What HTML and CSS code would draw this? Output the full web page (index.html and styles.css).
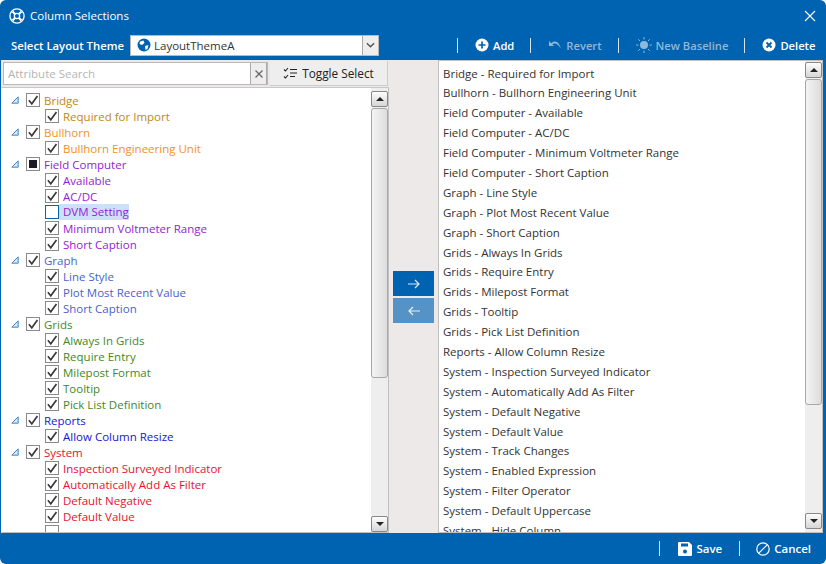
FILE: index.html
```html
<!DOCTYPE html>
<html lang="en">
<head>
<meta charset="utf-8">
<title>Column Selections</title>
<link rel="stylesheet" href="styles.css">
</head>
<body>
<svg class="defs" width="0" height="0" aria-hidden="true">
  <symbol id="chk" viewBox="0 0 14 14"><path d="M2.2 7.200 5.600 11.400 12.200 2.400" fill="none" stroke="#3c3c3c" stroke-width="2"/></symbol>
  <symbol id="tri" viewBox="0 0 8 8"><path d="M.8 7.200H7.200V.8Z" fill="#d5e6f4" stroke="#3f8ac4" stroke-width="1"/></symbol>
</svg>
<div class="window">
  <header class="titlebar">
    <svg class="title-icon" viewBox="0 0 18 18" width="16" height="16"><circle cx="9" cy="9" r="8" fill="none" stroke="#fff" stroke-width="1.5"/><circle cx="9" cy="9" r="3" fill="none" stroke="#fff" stroke-width="1.5"/><path d="M4 4 7 7M14 4 11 7M4 14 7 11M14 14 11 11" stroke="#fff" stroke-width="2.4"/></svg>
    <span class="title-text">Column Selections</span>
    <svg class="close" viewBox="0 0 12 12" width="12" height="12"><path d="M1 1 11 11M11 1 1 11" stroke="#fff" stroke-width="1.1" fill="none"/></svg>
  </header>
  <div class="toolbar">
    <span class="theme-label">Select Layout Theme</span>
    <div class="combo">
      <svg class="globe" viewBox="0 0 14 14" width="14" height="14"><circle cx="7" cy="7" r="6.5" fill="#0063b1"/><path d="M3 3.5 6.5 2.5 7.5 5 5 7 2.5 6ZM8 8 11.5 7 10.5 11 8.5 12Z" fill="#fff"/></svg>
      <span class="combo-text">LayoutThemeA</span>
      <span class="combo-btn"><svg viewBox="0 0 10 6" width="9" height="6"><path d="M1 1 5 5 9 1" fill="none" stroke="#555" stroke-width="1.6"/></svg></span>
    </div>
    <div class="actions">
      <i class="sep"></i>
      <span class="act"><svg viewBox="0 0 14 14" width="14" height="14"><circle cx="7" cy="7" r="6.5" fill="#fff"/><path d="M7 3.5v7M3.500 7h7" stroke="#0063b1" stroke-width="1.7"/></svg>Add</span>
      <i class="sep"></i>
      <span class="act off"><svg viewBox="0 0 14 10" width="14" height="10"><path d="M1 1V6H6L4.300 4.300C7 2.800 10 3.600 12.800 8.600 11.500 2.500 7.300-.6 3.200 3.200Z" fill="#8fb9da"/></svg>Revert</span>
      <i class="sep"></i>
      <span class="act off"><svg viewBox="0 0 16 16" width="16" height="16"><circle cx="8" cy="8" r="4" fill="#8fb9da"/><path d="M8 0v2.500M8 13.500V16M0 8h2.500M13.500 8H16M2.300 2.300 4 4M12 12l1.700 1.700M13.700 2.300 12 4M4 12l-1.700 1.700" stroke="#8fb9da"/></svg>New Baseline</span>
      <i class="sep"></i>
      <span class="act"><svg viewBox="0 0 14 14" width="14" height="14"><circle cx="7" cy="7" r="6.500" fill="#fff"/><path d="M4.500 4.500 9.500 9.500M9.500 4.500 4.500 9.500" stroke="#0063b1" stroke-width="1.800"/></svg>Delete</span>
    </div>
  </div>
  <main class="content">
    <section class="left">
      <div class="searchrow">
        <div class="search">
          <span class="placeholder">Attribute Search</span>
          <span class="clear"><svg viewBox="0 0 8 8" width="8" height="8"><path d="M.5.500 7.500 7.500M7.500.500.500 7.500" stroke="#666" stroke-width="1.300"/></svg></span>
        </div>
        <button class="toggle"><svg viewBox="0 0 14 12" width="14" height="12"><path d="M1 2.500 2.500 4 5 1M7 2.500h7M7 6h7M1 9.500 2.500 11 5 8M7 9.500h5" fill="none" stroke="#222" stroke-width="1.100"/></svg>Toggle Select</button>
      </div>
      <div class="treebox">
        <div class="tree">
          <div class="node c-bridge"><svg class="exp"><use href="#tri"/></svg><span class="cb"><svg><use href="#chk"/></svg></span><span>Bridge</span></div>
          <div class="leaf c-bridge"><span class="cb"><svg><use href="#chk"/></svg></span><span>Required for Import</span></div>
          <div class="node c-bull"><svg class="exp"><use href="#tri"/></svg><span class="cb"><svg><use href="#chk"/></svg></span><span>Bullhorn</span></div>
          <div class="leaf c-bull"><span class="cb"><svg><use href="#chk"/></svg></span><span>Bullhorn Engineering Unit</span></div>
          <div class="node c-field"><svg class="exp"><use href="#tri"/></svg><span class="cb"><b class="mixed"></b></span><span>Field Computer</span></div>
          <div class="leaf c-field"><span class="cb"><svg><use href="#chk"/></svg></span><span>Available</span></div>
          <div class="leaf c-field"><span class="cb"><svg><use href="#chk"/></svg></span><span>AC/DC</span></div>
          <div class="leaf c-field"><span class="cb focus"></span><span class="hl">DVM Setting</span></div>
          <div class="leaf c-field"><span class="cb"><svg><use href="#chk"/></svg></span><span>Minimum Voltmeter Range</span></div>
          <div class="leaf c-field"><span class="cb"><svg><use href="#chk"/></svg></span><span>Short Caption</span></div>
          <div class="node c-graph"><svg class="exp"><use href="#tri"/></svg><span class="cb"><svg><use href="#chk"/></svg></span><span>Graph</span></div>
          <div class="leaf c-graph"><span class="cb"><svg><use href="#chk"/></svg></span><span>Line Style</span></div>
          <div class="leaf c-graph"><span class="cb"><svg><use href="#chk"/></svg></span><span>Plot Most Recent Value</span></div>
          <div class="leaf c-graph"><span class="cb"><svg><use href="#chk"/></svg></span><span>Short Caption</span></div>
          <div class="node c-grids"><svg class="exp"><use href="#tri"/></svg><span class="cb"><svg><use href="#chk"/></svg></span><span>Grids</span></div>
          <div class="leaf c-grids"><span class="cb"><svg><use href="#chk"/></svg></span><span>Always In Grids</span></div>
          <div class="leaf c-grids"><span class="cb"><svg><use href="#chk"/></svg></span><span>Require Entry</span></div>
          <div class="leaf c-grids"><span class="cb"><svg><use href="#chk"/></svg></span><span>Milepost Format</span></div>
          <div class="leaf c-grids"><span class="cb"><svg><use href="#chk"/></svg></span><span>Tooltip</span></div>
          <div class="leaf c-grids"><span class="cb"><svg><use href="#chk"/></svg></span><span>Pick List Definition</span></div>
          <div class="node c-rep"><svg class="exp"><use href="#tri"/></svg><span class="cb"><svg><use href="#chk"/></svg></span><span>Reports</span></div>
          <div class="leaf c-rep"><span class="cb"><svg><use href="#chk"/></svg></span><span>Allow Column Resize</span></div>
          <div class="node c-sys"><svg class="exp"><use href="#tri"/></svg><span class="cb"><svg><use href="#chk"/></svg></span><span>System</span></div>
          <div class="leaf c-sys"><span class="cb"><svg><use href="#chk"/></svg></span><span>Inspection Surveyed Indicator</span></div>
          <div class="leaf c-sys"><span class="cb"><svg><use href="#chk"/></svg></span><span>Automatically Add As Filter</span></div>
          <div class="leaf c-sys"><span class="cb"><svg><use href="#chk"/></svg></span><span>Default Negative</span></div>
          <div class="leaf c-sys"><span class="cb"><svg><use href="#chk"/></svg></span><span>Default Value</span></div>
          <div class="leaf c-sys"><span class="cb"></span></div>
        </div>
        <div class="scrollbar tree-sb">
          <span class="sb-btn"><svg viewBox="0 0 8 4" width="8" height="4"><path d="M0 4 4 0 8 4Z" fill="#222"/></svg></span>
          <span class="thumb"></span>
          <span class="sb-btn"><svg viewBox="0 0 8 4" width="8" height="4"><path d="M0 0 4 4 8 0Z" fill="#222"/></svg></span>
        </div>
      </div>
    </section>
    <div class="middle">
      <button class="mv"><svg viewBox="0 0 12 10" width="12" height="10"><path d="M0 5h11M7 1l4 4-4 4" fill="none" stroke="#dce9f4" stroke-width="1.200"/></svg></button>
      <button class="mv dim"><svg viewBox="0 0 12 10" width="12" height="10"><path d="M12 5H1M5 1 1 5l4 4" fill="none" stroke="#e6eff6" stroke-width="1.200"/></svg></button>
    </div>
    <section class="right">
      <div class="list">
        <div>Bridge - Required for Import</div>
        <div>Bullhorn - Bullhorn Engineering Unit</div>
        <div>Field Computer - Available</div>
        <div>Field Computer - AC/DC</div>
        <div>Field Computer - Minimum Voltmeter Range</div>
        <div>Field Computer - Short Caption</div>
        <div>Graph - Line Style</div>
        <div>Graph - Plot Most Recent Value</div>
        <div>Graph - Short Caption</div>
        <div>Grids - Always In Grids</div>
        <div>Grids - Require Entry</div>
        <div>Grids - Milepost Format</div>
        <div>Grids - Tooltip</div>
        <div>Grids - Pick List Definition</div>
        <div>Reports - Allow Column Resize</div>
        <div>System - Inspection Surveyed Indicator</div>
        <div>System - Automatically Add As Filter</div>
        <div>System - Default Negative</div>
        <div>System - Default Value</div>
        <div>System - Track Changes</div>
        <div>System - Enabled Expression</div>
        <div>System - Filter Operator</div>
        <div>System - Default Uppercase</div>
        <div>System - Hide Column</div>
      </div>
      <div class="scrollbar list-sb">
        <span class="sb-btn"><svg viewBox="0 0 8 4" width="8" height="4"><path d="M0 4 4 0 8 4Z" fill="#222"/></svg></span>
        <span class="thumb"></span>
        <span class="sb-btn"><svg viewBox="0 0 8 4" width="8" height="4"><path d="M0 0 4 4 8 0Z" fill="#222"/></svg></span>
      </div>
    </section>
  </main>
  <footer class="footer">
    <i class="sep"></i>
    <span class="act"><svg viewBox="0 0 14 14" width="14" height="14"><path d="M0 1a1 1 0 0 1 1-1h10l3 3v10a1 1 0 0 1-1 1H1a1 1 0 0 1-1-1Z" fill="#fff"/><rect x="3" y="1.500" width="7" height="3" fill="#0063b1"/><circle cx="7" cy="9.500" r="2" fill="#0063b1"/></svg>Save</span>
    <i class="sep"></i>
    <span class="act"><svg viewBox="0 0 14 14" width="14" height="14"><circle cx="7" cy="7" r="6.200" fill="none" stroke="#fff" stroke-width="1.200"/><path d="M2.800 11.200 11.200 2.800" stroke="#fff" stroke-width="1.200"/></svg>Cancel</span>
  </footer>
</div>
</body>
</html>
```
FILE: styles.css
```css
* { box-sizing: border-box; }
html, body { margin: 0; padding: 0; background: #fff; }
.defs { position: absolute; }
.window {
  width: 826px; height: 564px; display: flex; flex-direction: column;
  background: #0063b1; border-radius: 6px; overflow: hidden;
  font-family: "Open Sans", "Noto Sans", sans-serif; font-size: 11.5px; color: #fff;
}
.titlebar { height: 31px; flex: none; display: flex; align-items: center; padding: 0 10px 0 9px; }
.title-icon { margin-right: 5px; }
.title-text { flex: 1; }
.toolbar { height: 29px; flex: none; display: flex; align-items: center; padding: 0 0 1px 11px; }
.theme-label { width: 119px; flex: none; font-weight: 600; font-size: 11.3px; white-space: nowrap; }
.combo {
  width: 249px; height: 21px; flex: none; background: #fff; border: 1px solid #b9b9b9;
  display: flex; align-items: center; padding-left: 6px; color: #333;
}
.combo-text { flex: 1; margin-left: 3px; }
.combo-btn {
  width: 16px; height: 19px; background: #eee; border: 1px solid #aaa; border-width: 0 0 0 1px;
  display: flex; align-items: center; justify-content: center;
}
.actions { flex: 1; display: flex; align-items: center; padding-left: 78px; }
.sep { display: block; width: 1px; height: 15px; background: #d5e5f2; flex: none; }
.act { display: inline-flex; align-items: center; gap: 4px; font-weight: 600; font-size: 11.2px; color: #fff; margin: 0 16px 0 17px; white-space: nowrap; }
.act.off { color: #8fb9da; }
.content { height: 473px; flex: none; display: flex; background: #ece9e8; margin: 0 3px 0 1px; }
.left { width: 388px; flex: none; display: flex; flex-direction: column; }
.searchrow { height: 27px; flex: none; display: flex; padding: 2px 0 0 2px; }
.search {
  width: 265px; height: 23px; background: #fff; border: 1px solid #b8b8b8;
  display: flex; align-items: center; padding-left: 4px; margin-right: 2px;
}
.placeholder { flex: 1; color: #b5b5b5; }
.clear {
  width: 17px; height: 21px; background: #eee; border: 1px solid #aaa; border-width: 0 1px;
  display: flex; align-items: center; justify-content: center;
}
.toggle {
  width: 118px; height: 25px; margin-top: -1px; background: #eee; border: 0; border-right: 1px solid #ccc; border-bottom: 1px solid #ccc;
  font: inherit; font-size: 11.8px; color: #222; display: flex; align-items: center; justify-content: center; gap: 5px; padding: 0;
}
.treebox { flex: 1; min-height: 0; display: flex; background: #fff; border: 1px solid #c0c0c0; border-left: 1px solid #fff; border-top: 1px solid #c8c8c8; }
.tree { flex: 1; overflow: hidden; padding-top: 4px; }
.node, .leaf { height: 16px; display: flex; align-items: center; white-space: nowrap; }
.node { padding-left: 9px; }
.leaf { padding-left: 43px; }
.exp { width: 8px; height: 8px; margin-right: 7px; flex: none; }
.cb {
  width: 14px; height: 14px; flex: none; border: 1px solid #8a8a8a; background: #fff; margin-right: 4px;
  display: flex; align-items: center; justify-content: center;
}
.cb svg { width: 12px; height: 12px; }
.cb.focus { border-color: #0063b1; }
.mixed { width: 8px; height: 8px; background: #1e1e1e; display: block; }
.hl { background: #cce1f8; height: 16px; line-height: 16px; margin-left: -4px; padding-left: 4px; }
.c-bridge { color: #c8860d; }
.c-bull { color: #f7901e; }
.c-field { color: #9a18d8; }
.c-graph { color: #4a5fd0; }
.c-grids { color: #3f8a1a; }
.c-rep { color: #1616d0; }
.c-sys { color: #e8112d; }
.scrollbar { width: 17px; flex: none; background: #eee; display: flex; flex-direction: column; }
.sb-btn {
  height: 16px; flex: none; border: 1px solid #888; border-radius: 2px; background: linear-gradient(#fdfdfd, #d6d6d6);
  display: flex; align-items: center; justify-content: center;
}
.thumb { display: block; background: linear-gradient(90deg, #f4f4f4, #dcdcdc); border: 1px solid #a8a8a8; border-radius: 3px; margin-top: 1px; }
.tree-sb { padding-top: 3px; }
.tree-sb .thumb { height: 272px; margin-bottom: 138px; }
.list-sb .thumb { height: 326px; margin-bottom: 108px; }
.middle { width: 49px; flex: none; display: flex; flex-direction: column; padding: 211px 0 0 4px; gap: 2px; }
.mv { width: 41px; height: 25px; background: #0063b1; border: 0; padding: 0; display: flex; align-items: center; justify-content: center; }
.mv.dim { background: #5592c5; }
.right { flex: 1; min-width: 0; display: flex; background: #fff; border: 1px solid #c0c0c0; }
.list { flex: 1; overflow: hidden; padding: 2.5px 0 0 4px; color: #333; }
.list div { height: 19.9px; line-height: 19.9px; white-space: nowrap; }
.list-sb { padding-top: 1px; }
.footer { flex: 1; display: flex; align-items: center; justify-content: flex-end; }
.footer .act { font-size: 11.5px; margin: 0 17px 0 18px; }
.footer .act:last-child { margin: 0 15px 0 16px; }
```
